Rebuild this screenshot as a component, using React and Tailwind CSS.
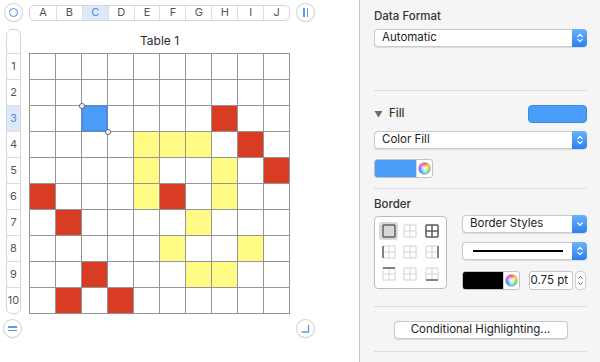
import clsx from "clsx";

const COLS = ["A", "B", "C", "D", "E", "F", "G", "H", "I", "J"];

// cell colours keyed by "row-col" (row 1-based, col 0-based)
const FILLS = {
  "3-7": "red",
  "4-4": "yel",
  "4-5": "yel",
  "4-6": "yel",
  "4-8": "red",
  "5-4": "yel",
  "5-7": "yel",
  "5-9": "red",
  "6-0": "red",
  "6-4": "yel",
  "6-5": "red",
  "6-7": "yel",
  "7-1": "red",
  "7-6": "yel",
  "8-5": "yel",
  "8-8": "yel",
  "9-2": "red",
  "9-6": "yel",
  "9-7": "yel",
  "10-1": "red",
  "10-3": "red",
};

const RoundButton = ({ children }) => (
  <div className="w-[19px] h-[19px] rounded-full border border-[#d2d2d2] bg-white flex items-center justify-center shadow-[0_0.5px_1px_rgba(0,0,0,0.08)]">
    {children}
  </div>
);

const Chevrons = ({ down }) =>
  down ? (
    <svg width="8" height="12" viewBox="0 0 8 12">
      <path d="M1.8 5 L4 7.2 L6.2 5" fill="none" stroke="white" strokeWidth="1.3" strokeLinecap="round" strokeLinejoin="round" />
    </svg>
  ) : (
    <svg width="8" height="12" viewBox="0 0 8 12">
      <path d="M1.8 4.6 L4 2.4 L6.2 4.6" fill="none" stroke="white" strokeWidth="1.2" strokeLinecap="round" strokeLinejoin="round" />
      <path d="M1.8 7.4 L4 9.6 L6.2 7.4" fill="none" stroke="white" strokeWidth="1.2" strokeLinecap="round" strokeLinejoin="round" />
    </svg>
  );

// macOS style popup button
const Popup = ({ children, down, className }) => (
  <div
    className={clsx(
      "flex h-[18px] rounded-[4px] border border-[#cbcbcb] bg-white shadow-[0_0.5px_1px_rgba(0,0,0,0.1)]",
      className
    )}
  >
    <div className="flex-1 flex items-center pl-[7px] text-[11.5px] text-[#222] leading-none">
      {children}
    </div>
    <div className="w-[15px] -my-px -mr-px rounded-r-[4px] bg-linear-to-b from-[#6ab2fb] to-[#2c7ef1] flex items-center justify-center">
      <Chevrons down={down} />
    </div>
  </div>
);

const ColorWell = ({ color, width, swatch }) => (
  <div
    className={clsx(
      "flex h-[19px] rounded-[3px] border border-[#c2c2c2] bg-white overflow-hidden",
      width
    )}
  >
    <div className={clsx(swatch, color)} />
    <div className="flex-1 flex items-center justify-center border-l border-[#d4d4d4]">
      <div className="w-[13px] h-[13px] rounded-full bg-[radial-gradient(circle,white_0%,rgba(255,255,255,0.6)_35%,transparent_70%),conic-gradient(#ff3b30,#ffcc00,#4cd964,#5ac8fa,#007aff,#c644fc,#ff3b30)] border border-[#bdbdbd]" />
    </div>
  </div>
);

// small 2x2 grid glyph used in the border picker
const BorderGlyph = ({ dark = [] }) => {
  const light = "#d3d3d3";
  const ink = "#6a6a6a";
  const segs = {
    top: "M1 1 H13",
    bottom: "M1 13 H13",
    left: "M1 1 V13",
    right: "M13 1 V13",
    h: "M1 7 H13",
    v: "M7 1 V13",
  };
  return (
    <svg width="14" height="14" viewBox="0 0 14 14">
      {Object.entries(segs).map(([k, d]) => (
        <path key={k} d={d} stroke={light} strokeWidth="1" fill="none" />
      ))}
      {dark.map((k) => (
        <path key={k} d={segs[k]} stroke={ink} strokeWidth="1.6" fill="none" />
      ))}
    </svg>
  );
};

const BORDER_GLYPHS = [
  ["top", "bottom", "left", "right"],
  [],
  ["top", "bottom", "left", "right", "h", "v"],
  ["left"],
  [],
  ["right"],
  ["top"],
  [],
  ["bottom"],
];

const Divider = ({ className }) => (
  <div className={clsx("h-px bg-[#dcdcdc]", className)} />
);

// Spreadsheet canvas
const Sheet = () => {
  return (
    <div className="w-[360px] h-[362px] shrink-0 bg-white border-r border-[#c6c6c6] pt-[3px] pl-[4px]">
      {/* column header bar */}
      <div className="flex items-center">
        <RoundButton>
          <div className="w-[9px] h-[9px] rounded-full border border-[#4a90e2]" />
        </RoundButton>
        <div className="ml-[6px] w-[261px] h-[16px] grid grid-cols-10 rounded-[5px] border border-[#d6d6d6] overflow-hidden bg-white">
          {COLS.map((c, i) => (
            <div
              key={c}
              className={clsx(
                "flex items-center justify-center text-[11px] leading-none",
                i > 0 && "border-l border-[#dedede]",
                c === "C" ? "bg-[#dde9fa] text-[#4a8fe0]" : "text-[#555]"
              )}
            >
              {c}
            </div>
          ))}
        </div>
        <div className="ml-[6px]">
          <RoundButton>
            <div className="flex gap-[2px]">
              <div className="w-[1.5px] h-[9px] bg-[#5a9cea]" />
              <div className="w-[1.5px] h-[9px] bg-[#5a9cea]" />
            </div>
          </RoundButton>
        </div>
      </div>

      <div className="flex mt-[7px]">
        {/* row header */}
        <div className="ml-[2px] w-[15px] rounded-[6px] border border-[#d6d6d6] overflow-hidden flex flex-col">
          <div className="h-[24px] border-b border-[#dedede]" />
          {Array.from({ length: 10 }, (_, i) => (
            <div
              key={i}
              className={clsx(
                "flex items-center justify-center text-[11px] leading-none",
                i < 9 ? "h-[26px] border-b border-[#dedede]" : "h-[25px]",
                i === 2 ? "bg-[#dde9fa] text-[#4a8fe0]" : "text-[#555]"
              )}
            >
              {i + 1}
            </div>
          ))}
        </div>

        {/* table */}
        <div className="ml-[8px]">
          <div className="h-[24px] flex items-center justify-center text-[12px] text-[#2a2a2a]">
            Table 1
          </div>
          <div className="grid grid-cols-[repeat(10,26px)] border-l border-t border-[#959595]">
            {Array.from({ length: 10 }, (_, r) =>
              COLS.map((c, ci) => {
                const key = `${r + 1}-${ci}`;
                const fill = FILLS[key];
                const selected = key === "3-2";
                return (
                  <div
                    key={key}
                    className={clsx(
                      "h-[26px] border-r border-b border-[#959595]",
                      fill === "red" && "bg-[#d83c22]",
                      fill === "yel" && "bg-[#fefa84]",
                      selected && "relative z-10 bg-[#4a9df6]"
                    )}
                  >
                    {selected && (
                      <>
                        <div className="absolute -top-px -left-px w-[27px] h-[27px] border-2 border-[#3f7fd6]/50" />
                        <div className="absolute -top-[3px] -left-[3px] w-[6px] h-[6px] rounded-full bg-white border border-[#4d5f93]" />
                        <div className="absolute -bottom-[4px] -right-[4px] w-[6px] h-[6px] rounded-full bg-white border border-[#4d5f93]" />
                      </>
                    )}
                  </div>
                );
              })
            )}
          </div>
        </div>
      </div>

      {/* bottom controls */}
      <div className="flex items-center justify-between w-[312px] -ml-px mt-[5px]">
        <RoundButton>
          <div className="flex flex-col gap-[2px]">
            <div className="w-[9px] h-[1.5px] bg-[#5a9cea]" />
            <div className="w-[9px] h-[1.5px] bg-[#5a9cea]" />
          </div>
        </RoundButton>
        <RoundButton>
          <svg width="11" height="11" viewBox="0 0 11 11">
            <path d="M1.5 9 H8.5 V2" fill="none" stroke="#5a9cea" strokeWidth="1.4" />
          </svg>
        </RoundButton>
      </div>
    </div>
  );
};

// Format inspector
const Inspector = () => {
  return (
    <div className="flex-1 h-[362px] bg-[#f5f5f5] pl-[14px] pr-[13px] pt-[9px] flex flex-col text-[#222]">
      <div className="text-[11.5px] leading-[14px] font-medium text-[#333]">Data Format</div>
      <Popup className="mt-[6px]">Automatic</Popup>

      <Divider className="mt-[43px]" />

      {/* Fill */}
      <div className="mt-[14px] h-[18px] flex items-center">
        <svg width="9" height="8" viewBox="0 0 9 8">
          <path d="M0.5 1 H8.5 L4.5 7.5 Z" fill="#6b6b6b" />
        </svg>
        <span className="ml-[6px] text-[11.5px] font-medium text-[#333]">Fill</span>
        <div className="ml-auto w-[59px] h-[18px] rounded-[4px] bg-[#4a9df6] border border-[#3d8ae6]" />
      </div>
      <Popup className="mt-[8px]">Color Fill</Popup>
      <div className="mt-[10px]">
        <ColorWell color="bg-[#4a9df6]" width="w-[59px]" swatch="w-[41px]" />
      </div>

      <Divider className="mt-[10px]" />

      {/* Border */}
      <div className="mt-[8px] text-[11.5px] leading-[14px] font-medium text-[#333]">Border</div>
      <div className="mt-[4px] flex items-start">
        <div className="mt-px w-[73px] h-[73px] rounded-[4px] border border-[#bcbcbc] bg-white grid grid-cols-3 grid-rows-3 p-[3px]">
          {BORDER_GLYPHS.map((d, i) => (
            <div key={i} className="flex items-center justify-center">
              <div
                className={clsx(
                  "w-[19px] h-[18px] rounded-[3px] flex items-center justify-center",
                  i === 0 && "bg-[#d9d9d9]"
                )}
              >
                <BorderGlyph dark={d} />
              </div>
            </div>
          ))}
        </div>
        <div className="ml-[15px] flex-1 flex flex-col">
          <Popup down>Border Styles</Popup>
          <Popup className="mt-[9px]">
            <div className="w-[90px] h-[2px] bg-black ml-[3px]" />
          </Popup>
          <div className="mt-[11px] flex items-center">
            <ColorWell color="bg-black" width="w-[58px]" swatch="w-[40px]" />
            <div className="ml-[9px] w-[44px] h-[19px] rounded-[3px] border border-[#c6c6c6] bg-white flex items-center justify-end pr-[4px] text-[11.5px] text-[#222]">
              0.75 pt
            </div>
            <div className="ml-[2px] w-[11px] h-[19px] rounded-[4px] border border-[#cfcfcf] bg-white flex items-center justify-center">
              <svg width="7" height="13" viewBox="0 0 7 13">
                <path d="M1.5 4.5 L3.5 2.5 L5.5 4.5" fill="none" stroke="#555" strokeWidth="1" />
                <path d="M1.5 8.5 L3.5 10.5 L5.5 8.5" fill="none" stroke="#555" strokeWidth="1" />
              </svg>
            </div>
          </div>
        </div>
      </div>

      <Divider className="mt-[16px]" />

      <div className="mt-[14px] mx-auto w-[174px] h-[18px] rounded-[4px] border border-[#c9c9c9] bg-white shadow-[0_0.5px_1px_rgba(0,0,0,0.1)] flex items-center justify-center text-[11.5px] text-[#222]">
        Conditional Highlighting...
      </div>

      <Divider className="mt-[12px]" />
    </div>
  );
};

const App = () => {
  return (
    <div className="w-[600px] h-[362px] flex overflow-hidden font-['Inter',sans-serif]">
      <Sheet />
      <Inspector />
    </div>
  );
};

export default App;
